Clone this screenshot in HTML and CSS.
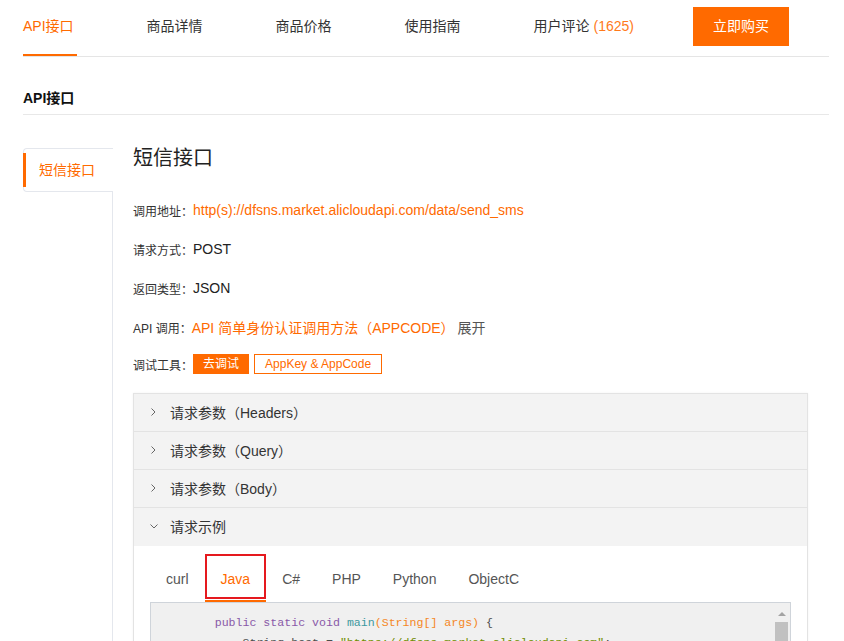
FILE: index.html
```html
<!DOCTYPE html>
<html lang="zh-CN">
<head>
<meta charset="utf-8">
<title>API接口</title>
<link rel="stylesheet" href="styles.css">
</head>
<body>
<div class="page">
  <nav class="topnav">
    <a class="nav-item active">API接口</a>
    <a class="nav-item">商品详情</a>
    <a class="nav-item">商品价格</a>
    <a class="nav-item">使用指南</a>
    <a class="nav-item last">用户评论 <span class="count">(1625)</span></a>
    <a class="buy-btn">立即购买</a>
  </nav>

  <h2 class="section-title">API接口</h2>

  <div class="api-layout">
    <aside class="side">
      <div class="side-tab active">短信接口</div>
      <div class="side-fill"></div>
    </aside>

    <main class="api-main">
      <h1 class="api-title">短信接口</h1>

      <div class="row"><span class="label">调用地址：</span><a class="link">http(s)://dfsns.market.alicloudapi.com/data/send_sms</a></div>
      <div class="row"><span class="label">请求方式：</span><span class="value">POST</span></div>
      <div class="row"><span class="label">返回类型：</span><span class="value">JSON</span></div>
      <div class="row"><span class="label">API 调用：</span><a class="link">API 简单身份认证调用方法（APPCODE）</a><span class="more">展开</span></div>
      <div class="row row-tools"><span class="label">调试工具：</span><a class="btn-solid">去调试</a><a class="btn-outline">AppKey &amp; AppCode</a></div>

      <div class="collapse">
        <div class="col-head">
          <svg class="chev" width="5" height="8" viewBox="0 0 5 8"><polyline points="0.5,0.5 4,4 0.5,7.5" fill="none" stroke="#666" stroke-width="1"/></svg>
          <span>请求参数（Headers）</span>
        </div>
        <div class="col-head">
          <svg class="chev" width="5" height="8" viewBox="0 0 5 8"><polyline points="0.5,0.5 4,4 0.5,7.5" fill="none" stroke="#666" stroke-width="1"/></svg>
          <span>请求参数（Query）</span>
        </div>
        <div class="col-head">
          <svg class="chev" width="5" height="8" viewBox="0 0 5 8"><polyline points="0.5,0.5 4,4 0.5,7.5" fill="none" stroke="#666" stroke-width="1"/></svg>
          <span>请求参数（Body）</span>
        </div>
        <div class="col-head open">
          <svg class="chev-down" width="8" height="5" viewBox="0 0 8 5"><polyline points="0.5,0.5 4,4 7.5,0.5" fill="none" stroke="#666" stroke-width="1"/></svg>
          <span>请求示例</span>
        </div>
        <div class="col-body">
          <div class="lang-tabs">
            <span class="lang">curl</span>
            <span class="lang active">Java</span>
            <span class="lang">C#</span>
            <span class="lang">PHP</span>
            <span class="lang">Python</span>
            <span class="lang">ObjectC</span>
          </div>
          <div class="code-box">
<pre class="code">        <span class="kw">public static void</span> <span class="fn">main</span><span class="arg">(String[] args)</span> {
            String host = <span class="str">"https://dfsns.market.alicloudapi.com"</span>;
            String path = <span class="str">"/data/send_sms"</span>;
            String method = <span class="str">"POST"</span>;
            String appcode = <span class="str">"你自己的AppCode"</span>;
            Map&lt;String, String&gt; headers = <span class="kw">new</span> HashMap&lt;String, String&gt;();
            headers.put(<span class="str">"Authorization"</span>, <span class="str">"APPCODE "</span> + appcode);</pre>
            <div class="scrollbar">
              <span class="sb-up"></span>
              <span class="sb-thumb"></span>
            </div>
          </div>
        </div>
      </div>
    </main>
  </div>
</div>
</body>
</html>
```

FILE: styles.css
```css
html, body {
  margin: 0;
  padding: 0;
  overflow: hidden;
  background: #fff;
}

body {
  font-family: "Liberation Sans", Arial, "Noto Sans CJK SC", sans-serif;
  color: #333;
  font-size: 14px;
}

a { text-decoration: none; cursor: pointer; }

.page {
  padding: 0 15px 0 23px;
}

/* top nav */
.topnav {
  display: flex;
  align-items: flex-start;
  height: 56px;
  border-bottom: 1px solid #e5e5e5;
}

.nav-item {
  flex: none;
  height: 54px;
  line-height: 52px;
  border-bottom: 2px solid transparent;
  margin-right: 73px;
  color: #333;
  font-size: 14px;
  white-space: nowrap;
}

.nav-item.active {
  color: #ff6a00;
  border-bottom-color: #ff6a00;
  padding-right: 3px;
  margin-right: 70px;
}

.nav-item.last { margin-right: 0; }

.nav-item .count { color: #ff7a1a; }

.buy-btn {
  flex: none;
  margin-left: auto;
  margin-right: 40px;
  margin-top: 7px;
  width: 96px;
  height: 39px;
  line-height: 39px;
  text-align: center;
  background: #ff6a00;
  color: #fff;
  font-size: 14px;
}

/* section heading */
.section-title {
  margin: 31px 0 0;
  padding-bottom: 6px;
  line-height: 20px;
  font-size: 14px;
  font-weight: bold;
  color: #111;
  border-bottom: 1px solid #e8e8e8;
}

/* layout */
.api-layout {
  display: flex;
  margin-top: 33px;
}

.side {
  width: 90px;
  flex: none;
  display: flex;
  flex-direction: column;
}

.side-tab {
  position: relative;
  height: 42px;
  line-height: 42px;
  padding-left: 15px;
  border: 1px solid #e4e7ed;
  border-right: none;
  border-radius: 4px 0 0 4px;
  color: #ff6a00;
  font-size: 14px;
}

.side-tab.active::before {
  content: "";
  position: absolute;
  left: -1px;
  top: 4px;
  bottom: 4px;
  width: 3px;
  background: #ff6a00;
}

.side-fill {
  flex: 1;
  border-right: 1px solid #e4e7ed;
  min-height: 500px;
}

.api-main {
  flex: 1;
  padding: 0 21px 0 20px;
  min-width: 0;
}

.api-title {
  margin: 0;
  font-size: 20px;
  font-weight: normal;
  line-height: 20px;
  color: #222;
  font-family: "Liberation Sans", "Noto Sans CJK SC", sans-serif;
}

.row {
  display: flex;
  align-items: center;
  height: 20px;
  margin-top: 19px;
  white-space: nowrap;
}

.api-title + .row { margin-top: 32px; }

.row-tools { margin-top: 17px; }

.label {
  font-size: 12px;
  color: #333;
}

.value {
  font-size: 14px;
  color: #222;
}

.link {
  font-size: 14px;
  color: #ff6a00;
}

.more {
  font-size: 14px;
  color: #555;
  margin-left: 3px;
}

.btn-solid {
  height: 20px;
  line-height: 20px;
  padding: 0 10px;
  background: #ff6a00;
  color: #fff;
  font-size: 12px;
}

.btn-outline {
  height: 18px;
  line-height: 18px;
  padding: 0 10px;
  margin-left: 5px;
  border: 1px solid #ff6a00;
  color: #ff6a00;
  font-size: 12px;
}

/* collapse panel */
.collapse {
  margin-top: 19px;
  border: 1px solid #e3e3e3;
  border-bottom: none;
  box-shadow: 0 0 2px rgba(0, 0, 0, 0.06);
}

.col-head {
  display: flex;
  align-items: center;
  height: 37px;
  padding-left: 17px;
  padding-bottom: 2px;
  box-sizing: border-box;
  height: 38px;
  background: #f3f3f3;
  border-bottom: 1px solid #e3e3e3;
  font-size: 14px;
  color: #333;
}

.col-head.open {
  border-bottom: none;
}

.chev { margin-right: 14px; flex: none; }
.chev-down { margin-left: -1px; margin-right: 12px; flex: none; }

.col-body {
  background: #fff;
  padding: 8px 16px 0 16px;
}

.lang-tabs {
  display: flex;
}

.lang {
  position: relative;
  height: 41px;
  line-height: 41px;
  padding: 5px 16px 0;
  border-bottom: 2px solid transparent;
  color: #555;
  font-size: 14px;
}

.lang.active {
  color: #ff6a00;
  border-bottom-color: #ff6a00;
}

.lang.active::after {
  content: "";
  position: absolute;
  left: 0;
  right: 0;
  top: 0;
  bottom: 1px;
  border: 2px solid #e5191e;
}

.code-box {
  display: flex;
  border: 1px solid #cfd4da;
  background: #f0f0f0;
  height: 300px;
}

.code {
  flex: 1;
  margin: 0;
  padding: 10px 0 0 8px;
  font-family: "Liberation Mono", "Courier New", monospace;
  font-size: 11.6px;
  line-height: 20px;
  color: #4d4d4c;
  overflow: hidden;
}

.code .kw { color: #8959a8; }
.code .fn { color: #3e999f; }
.code .arg { color: #f5871f; }
.code .str { color: #718c00; }

.scrollbar {
  width: 15px;
  flex: none;
  margin-right: 1px;
  display: flex;
  flex-direction: column;
  align-items: center;
}

.sb-up {
  margin-top: 9px;
  width: 0;
  height: 0;
  border-left: 4px solid transparent;
  border-right: 4px solid transparent;
  border-bottom: 4px solid #a3a3a3;
}

.sb-thumb {
  margin-top: 6px;
  width: 13px;
  height: 120px;
  background: #c1c1c1;
}
```
